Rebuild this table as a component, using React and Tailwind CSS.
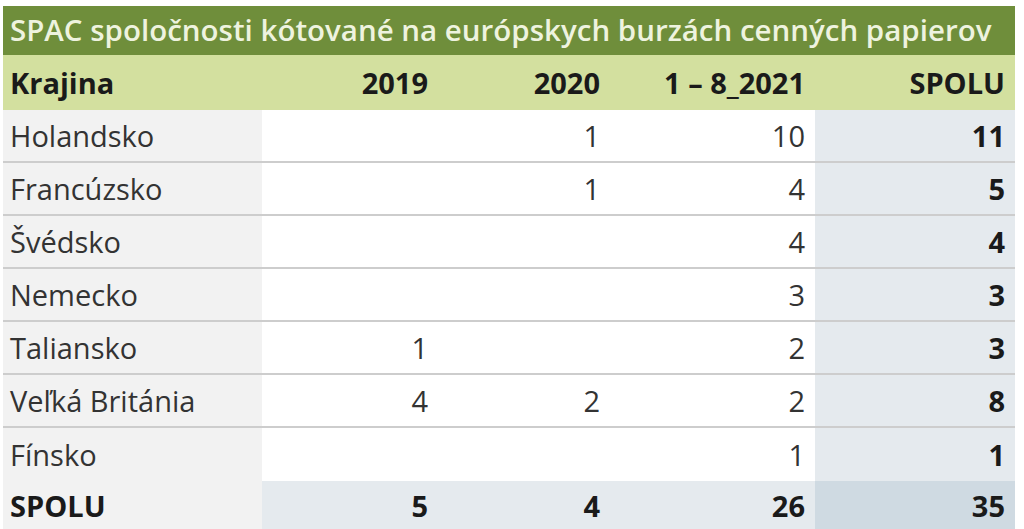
const rows = [
  { name: 'Holandsko', y19: '', y20: '1', y21: '10', total: '11' },
  { name: 'Francúzsko', y19: '', y20: '1', y21: '4', total: '5' },
  { name: 'Švédsko', y19: '', y20: '', y21: '4', total: '4' },
  { name: 'Nemecko', y19: '', y20: '', y21: '3', total: '3' },
  { name: 'Taliansko', y19: '1', y20: '', y21: '2', total: '3' },
  { name: 'Veľká Británia', y19: '4', y20: '2', y21: '2', total: '8' },
  { name: 'Fínsko', y19: '', y20: '', y21: '1', total: '1' },
];

const cols = 'grid grid-cols-[259px_176px_172px_205px_200px]';

export default function App() {
  return (
    <div className="min-h-[529px] w-[1024px] bg-white pt-[6px] pl-[3px] font-['Open_Sans',sans-serif]">
      <div className="w-[1012px]">
        <div className="flex h-[49px] items-center whitespace-nowrap bg-[#6f8e3b] pl-[7px] text-[29.5px] font-semibold text-[#eef3df]">
          SPAC spoločnosti kótované na európskych burzách cenných papierov
        </div>
        <div className={`${cols} h-[55px] items-center bg-[#d3e09f] text-[29px] font-bold text-[#1a1a1a]`}>
          <div className="pl-[7px]">Krajina</div>
          <div className="pr-[10px] text-right">2019</div>
          <div className="pr-[10px] text-right">2020</div>
          <div className="pr-[10px] text-right">1 – 8_2021</div>
          <div className="pr-[10px] text-right">SPOLU</div>
        </div>
        {rows.map((r, i) => (
          <div
            key={r.name}
            className={`${cols} h-[53px] text-[29px] text-[#333] ${i < rows.length - 1 ? 'border-b-2 border-[#cdcdcd]' : ''}`}
          >
            <div className="flex items-center bg-[#f2f2f2] pl-[7px]">{r.name}</div>
            <div className="flex items-center justify-end pr-[10px]">{r.y19}</div>
            <div className="flex items-center justify-end pr-[10px]">{r.y20}</div>
            <div className="flex items-center justify-end pr-[10px]">{r.y21}</div>
            <div className="flex items-center justify-end bg-[#e5eaee] pr-[10px] font-bold text-[#1a1a1a]">{r.total}</div>
          </div>
        ))}
        <div className={`${cols} h-[50px] text-[29px] font-bold text-[#1a1a1a]`}>
          <div className="flex items-center bg-[#f2f2f2] pl-[7px]">SPOLU</div>
          <div className="flex items-center justify-end bg-[#e5eaee] pr-[10px]">5</div>
          <div className="flex items-center justify-end bg-[#e5eaee] pr-[10px]">4</div>
          <div className="flex items-center justify-end bg-[#e5eaee] pr-[10px]">26</div>
          <div className="flex items-center justify-end bg-[#cfdae2] pr-[10px]">35</div>
        </div>
      </div>
    </div>
  );
}
